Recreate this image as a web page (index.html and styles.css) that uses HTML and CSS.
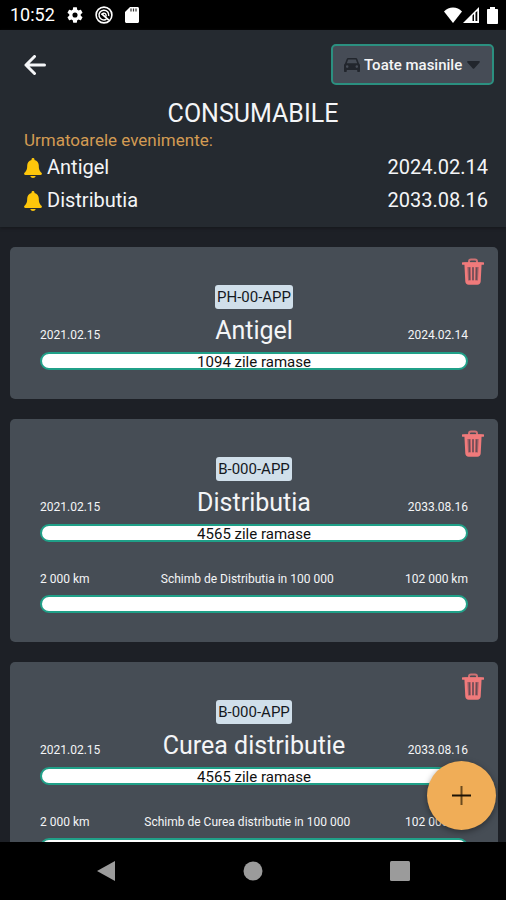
FILE: index.html
```html
<!DOCTYPE html>
<html lang="ro">
<head>
<meta charset="utf-8">
<meta name="viewport" content="width=device-width, initial-scale=1">
<title>Consumabile</title>
<link rel="stylesheet" href="styles.css">
</head>
<body>
<svg class="sprite" aria-hidden="true">
  <symbol id="bell" viewBox="0 0 18 20">
    <path d="M9 0c.9 0 1.500.6 1.500 1.400v.5c2.700.7 4.300 2.900 4.300 5.700 0 4.200 1 5.700 2.700 7.200.8.800.4 2.200-.8 2.200H1.300C.1 17-.3 15.600.5 14.800c1.700-1.500 2.700-3 2.700-7.200 0-2.800 1.600-5 4.300-5.700v-.5C7.500.6 8.100 0 9 0z"/>
    <path d="M6.300 18h5.400c-.3 1.300-1.400 2-2.700 2s-2.400-.7-2.700-2z"/>
  </symbol>
  <symbol id="trash" viewBox="0 0 22 27">
    <path d="M7 5V3.600C7 2.300 7.800 1.500 9 1.500h4c1.200 0 2 .8 2 2.100V5" fill="none" stroke="currentColor" stroke-width="2" opacity=".8"/>
    <path d="M1 5.500h20" stroke="currentColor" stroke-width="2.600" stroke-linecap="round"/>
    <path d="M3.800 6l.9 17.500c.1 1.200.9 1.800 2 1.800h8.600c1.100 0 1.900-.6 2-1.800L18.200 6z" fill="#a15f66" stroke="currentColor" stroke-width="2.800"/>
    <path d="M4 7.500h14M5 24h12" stroke="currentColor" stroke-width="3"/>
    <path d="M9.400 9v14M12.600 9v14" stroke="currentColor" stroke-width="1.400"/>
    <path d="M7.400 9.500l.3 12.500M11 9.500V22M14.600 9.500L14.300 22" stroke="#6b4c54" stroke-width="1.300"/>
  </symbol>
</svg>
<div class="app">
  <div class="status">
    <div class="status-group">
      <span class="clock">10:52</span>
      <svg width="16" height="16" viewBox="2 2 20 20" fill="currentColor" aria-hidden="true"><path d="M19.140 12.940c.04-.3.060-.61.060-.94 0-.32-.02-.64-.07-.94l2.030-1.580c.18-.14.230-.41.120-.61l-1.920-3.320c-.12-.22-.37-.29-.59-.22l-2.390.96c-.5-.38-1.030-.7-1.620-.94l-.36-2.540c-.04-.24-.24-.41-.48-.41h-3.840c-.24 0-.43.170-.47.410l-.36 2.540c-.59.240-1.130.570-1.620.940l-2.390-.96c-.22-.08-.47 0-.59.220L2.740 8.870c-.12.210-.08.470.12.610l2.030 1.580c-.05.300-.09.630-.09.940s.020.640.070.940l-2.030 1.580c-.18.140-.23.410-.12.610l1.920 3.320c.12.220.37.290.59.220l2.390-.96c.5.380 1.030.700 1.620.940l.36 2.540c.05.240.24.410.48.410h3.840c.24 0 .44-.17.47-.41l.36-2.540c.59-.24 1.130-.56 1.620-.94l2.390.96c.22.080.47 0 .59-.22l1.920-3.320c.12-.22.070-.47-.12-.61l-2.010-1.580zM12 15.200A3.200 3.200 0 1 1 12 8.800a3.200 3.200 0 0 1 0 6.400z"/></svg>
      <svg width="18" height="18" viewBox="0 0 18 18" fill="none" stroke="currentColor" aria-hidden="true"><circle cx="9" cy="9" r="7.900" stroke-width="1.600"/><path d="M11.500 13.200A4.900 4.900 0 1 1 13.700 10" stroke-width="1.500"/><path d="M6.500 7.600L13.800 14.200" stroke-width="1.800"/><path d="M7 8.800c.2-1.600 2.300-2.200 3.500-1.100.9.900.8 2.100.1 3" stroke-width="1.400"/></svg>
      <svg width="14" height="16" viewBox="0 0 14 16" aria-hidden="true"><path fill="currentColor" d="M5 0h7.500c.8 0 1.500.7 1.500 1.500v13c0 .8-.7 1.500-1.500 1.500h-11C.7 16 0 15.300 0 14.500V5z"/><path d="M6 1.500v3M8.500 1.500v3M11 1.500v3" stroke="#333" stroke-width="1.200"/></svg>
    </div>
    <div class="status-group status-right">
      <svg width="18" height="16" viewBox="0 0 18 16" fill="currentColor" aria-hidden="true"><path d="M9 16L0 4.500C2.500 1.800 5.500.5 9 .5s6.500 1.300 9 4z"/></svg>
      <svg width="16" height="16" viewBox="0 0 16 16" aria-hidden="true"><path fill="currentColor" d="M0 16L16 0v16z"/><path fill="#000" d="M9.500 8.500l1.500-1.500v7H9.500zM12.500 5.500L14.300 4v10h-1.800z"/></svg>
      <svg class="battery" width="11" height="17" viewBox="0 0 11 17" fill="currentColor" aria-hidden="true"><path d="M3 0h5v2h2c.6 0 1 .4 1 1v13c0 .6-.4 1-1 1H1c-.6 0-1-.4-1-1V3c0-.6.400-1 1-1h2z"/></svg>
    </div>
  </div>

  <header class="header">
    <div class="toolbar">
      <button class="back" type="button" aria-label="Inapoi">
        <svg width="22" height="20" viewBox="0 0 22 20" fill="none" stroke="currentColor" stroke-width="3" stroke-linecap="round" stroke-linejoin="round" aria-hidden="true"><path d="M20.500 10H2M10.500 1.500L2 10l8.500 8.500"/></svg>
      </button>
      <label class="picker">
        <svg width="16" height="14" viewBox="0 0 16 14" fill="currentColor" aria-hidden="true"><path fill-rule="evenodd" d="M2.600 1.200C2.900.4 3.400 0 4.200 0h7.600c.8 0 1.300.4 1.600 1.200L15 5.500c.6.400 1 .9 1 1.700V13c0 .6-.4 1-1 1h-.8c-.6 0-1-.4-1-1v-1H2.800v1c0 .6-.4 1-1 1H1c-.6 0-1-.4-1-1V7.200c0-.8.400-1.300 1-1.700zM4.200 1.400L2.800 5.200h10.400l-1.400-3.800zM3.200 7.300a1.300 1.300 0 1 0 0 2.600 1.300 1.300 0 0 0 0-2.600zm9.600 0a1.300 1.300 0 1 0 0 2.600 1.300 1.300 0 0 0 0-2.600z"/></svg>
        <select aria-label="Masina"><option>Toate masinile</option></select>
        <svg width="13" height="8" viewBox="0 0 13 8" fill="currentColor" aria-hidden="true"><path d="M1 0h11c.8 0 1.200.8.600 1.400L7.200 7.500c-.4.400-1 .4-1.400 0L.4 1.400C-.2.800.2 0 1 0z"/></svg>
      </label>
    </div>
    <h1 class="title">CONSUMABILE</h1>
    <h2 class="subtitle">Urmatoarele evenimente:</h2>
    <ul class="events">
      <li><svg class="bell" aria-hidden="true"><use href="#bell"/></svg><span>Antigel</span><time>2024.02.14</time></li>
      <li><svg class="bell" aria-hidden="true"><use href="#bell"/></svg><span>Distributia</span><time>2033.08.16</time></li>
    </ul>
  </header>

  <div class="content">
    <main class="list">
      <article class="card">
        <button class="delete" type="button" aria-label="Sterge"><svg aria-hidden="true"><use href="#trash"/></svg></button>
        <span class="plate">PH-00-APP</span>
        <div class="row row-title"><time>2021.02.15</time><h3>Antigel</h3><time>2024.02.14</time></div>
        <div class="bar">1094 zile ramase</div>
      </article>
      <article class="card">
        <button class="delete" type="button" aria-label="Sterge"><svg aria-hidden="true"><use href="#trash"/></svg></button>
        <span class="plate">B-000-APP</span>
        <div class="row row-title"><time>2021.02.15</time><h3>Distributia</h3><time>2033.08.16</time></div>
        <div class="bar">4565 zile ramase</div>
        <div class="row row-km"><span>2 000 km</span><span>Schimb de Distributia in 100 000</span><span>102 000 km</span></div>
        <div class="bar"></div>
      </article>
      <article class="card">
        <button class="delete" type="button" aria-label="Sterge"><svg aria-hidden="true"><use href="#trash"/></svg></button>
        <span class="plate">B-000-APP</span>
        <div class="row row-title"><time>2021.02.15</time><h3>Curea distributie</h3><time>2033.08.16</time></div>
        <div class="bar">4565 zile ramase</div>
        <div class="row row-km"><span>2 000 km</span><span>Schimb de Curea distributie in 100 000</span><span>102 000 km</span></div>
        <div class="bar"></div>
      </article>
    </main>
    <button class="fab" type="button" aria-label="Adauga">
      <svg width="19" height="19" viewBox="0 0 19 19" fill="none" aria-hidden="true"><path d="M9.500 0v19" stroke="#6b4a1f" stroke-width="2"/><path d="M0 9.500h19" stroke="#1c1206" stroke-width="2"/></svg>
    </button>
  </div>

  <nav class="nav">
    <button type="button" aria-label="Back"><svg width="20" height="20" viewBox="0 0 20 20" fill="currentColor" aria-hidden="true"><path d="M1 10L19 0v20z"/></svg></button>
    <button type="button" aria-label="Home"><svg width="20" height="20" viewBox="0 0 20 20" fill="currentColor" aria-hidden="true"><circle cx="10" cy="10" r="9.500"/></svg></button>
    <button type="button" aria-label="Recent"><svg width="20" height="20" viewBox="0 0 20 20" fill="currentColor" aria-hidden="true"><rect width="20" height="20" rx="1.500"/></svg></button>
  </nav>
</div>
</body>
</html>
```
FILE: styles.css
```css
* {
  box-sizing: border-box;
  margin: 0;
  padding: 0;
}

body {
  background: #1d2026;
  color: #f4f5f7;
  font-family: Roboto, sans-serif;
}

button {
  background: none;
  border: 0;
  color: inherit;
  cursor: pointer;
}

svg {
  display: block;
  flex: none;
}

h1, h2, h3 {
  font-weight: 400;
}

.sprite {
  position: absolute;
  width: 0;
  height: 0;
}

.app {
  display: flex;
  flex-direction: column;
  height: 100vh;
}

.status {
  display: flex;
  justify-content: space-between;
  align-items: center;
  height: 30px;
  padding: 0 8px 0 10px;
  background: #000;
  color: #fff;
}

.status-group {
  display: flex;
  align-items: center;
  gap: 12px;
}

.status-right {
  gap: 1px;
}

.battery {
  margin-left: 7px;
}

.clock {
  font-size: 18px;
  line-height: 30px;
}

.header {
  position: relative;
  padding: 14px 12px 10px;
  background: #252a30;
  box-shadow: 0 1px 3px #15171b;
}

.toolbar {
  display: flex;
  justify-content: space-between;
  align-items: center;
  padding-left: 12px;
}

.picker {
  display: flex;
  align-items: center;
  gap: 4px;
  height: 41px;
  padding: 0 12px 0 11px;
  border: 2px solid #2b9080;
  border-radius: 5px;
  background: #464c56;
  color: #22262d;
}

.picker select {
  appearance: none;
  border: 0;
  background: none;
  color: #f4f5f7;
  font: 500 15px/20px Roboto, sans-serif;
}

.title {
  margin-top: 14px;
  font-size: 25px;
  line-height: 30px;
  text-align: center;
}

.subtitle {
  padding-left: 12px;
  color: #d39b53;
  font-size: 17px;
  line-height: 22px;
}

.events {
  padding: 0 6px 0 12px;
  list-style: none;
  font-size: 20px;
  line-height: 33px;
}

.events li {
  display: flex;
  align-items: center;
  gap: 5px;
}

.events time {
  margin-left: auto;
}

.bell {
  width: 18px;
  height: 20px;
  fill: #fdc60b;
}

.content {
  position: relative;
  flex: 1;
  min-height: 0;
}

.list {
  display: flex;
  flex-direction: column;
  gap: 20px;
  height: 100%;
  padding: 20px 8px 0 10px;
  overflow: hidden;
}

.card {
  position: relative;
  display: flex;
  flex: none;
  flex-direction: column;
  padding: 38px 30px 29px;
  border-radius: 5px;
  background: #464d55;
}

.delete {
  position: absolute;
  top: 11px;
  right: 14px;
  color: #f07a7b;
}

.delete svg {
  width: 22px;
  height: 27px;
}

.plate {
  align-self: center;
  padding: 0 2px;
  border-radius: 3px;
  background: #d0dfea;
  color: #15191e;
  font-size: 15px;
  line-height: 24px;
}

.row {
  font-size: 12px;
  line-height: 16px;
}

.row-title {
  display: grid;
  grid-template-columns: 1fr auto 1fr;
  align-items: baseline;
  margin: 7px 0 6px;
}

.row-title > :last-child {
  text-align: right;
}

.row-title h3 {
  font-size: 25px;
  line-height: 30px;
}

.row-km {
  display: flex;
  justify-content: space-between;
  margin: 29px 0 8px;
}

.bar {
  height: 18px;
  border: 2px solid #20a088;
  border-radius: 9px;
  background: #fff;
  color: #111;
  font-size: 15px;
  line-height: 16px;
  text-align: center;
  overflow: hidden;
}

.fab {
  position: absolute;
  right: 10px;
  bottom: 12px;
  display: grid;
  place-items: center;
  width: 69px;
  height: 69px;
  border-radius: 50%;
  background: #f0ad57;
  box-shadow: 0 2px 6px #0006;
}

.nav {
  position: relative;
  display: grid;
  grid-template-columns: repeat(3, 1fr);
  place-items: center;
  height: 58px;
  padding: 0 33px;
  background: #000;
  color: #9b9b9b;
}
```
